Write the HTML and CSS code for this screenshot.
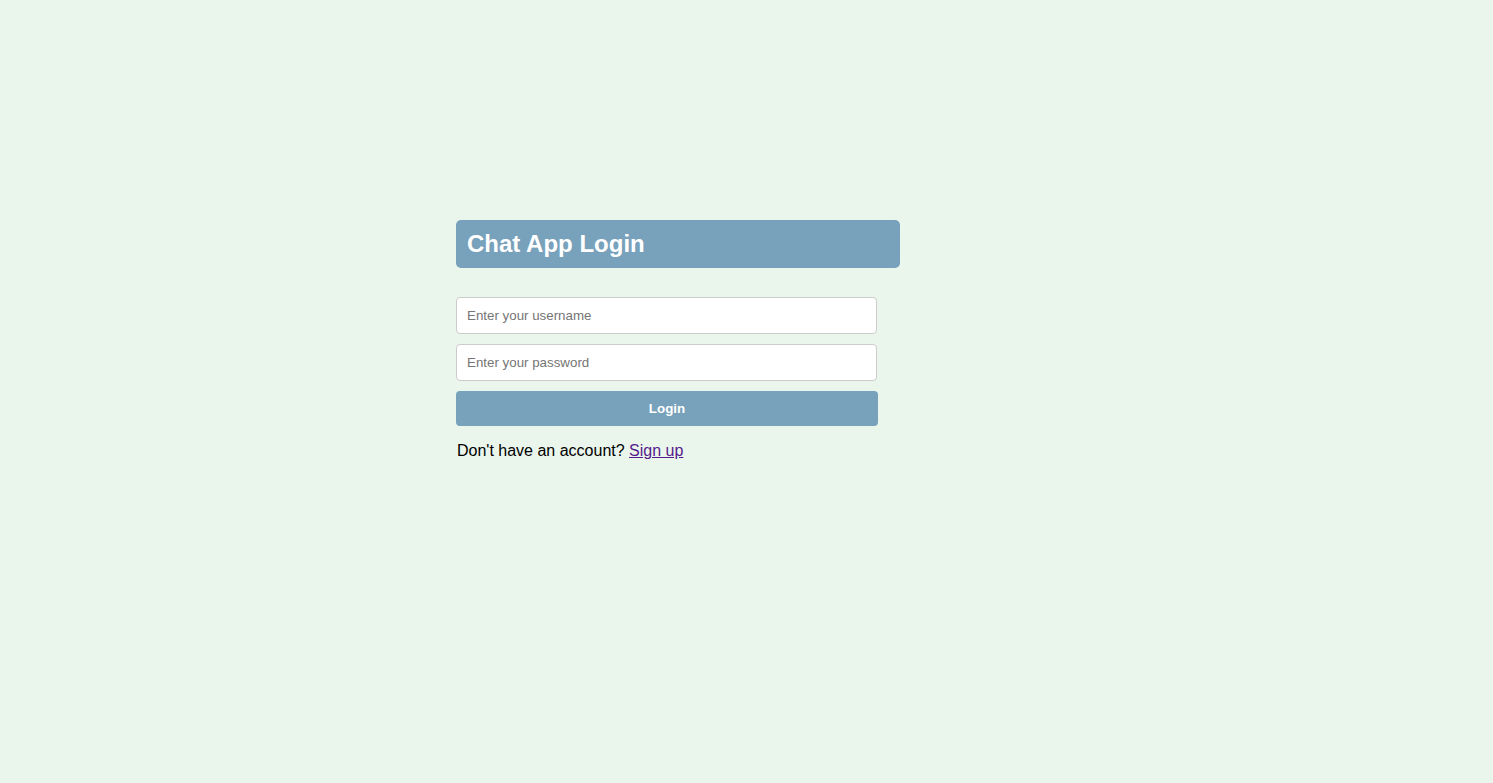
FILE: index.html
```html
<!DOCTYPE html>
<html lang="en">
<head>
<meta charset="utf-8">
<title>Chat App Login</title>
<link rel="stylesheet" href="styles.css">
</head>
<body>
<main class="page">
  <section class="card">
    <header class="card-header">
      <h1 class="title">Chat App Login</h1>
    </header>
    <form class="form">
      <input class="field" type="text" placeholder="Enter your username">
      <input class="field" type="password" placeholder="Enter your password">
      <button class="btn" type="button">Login</button>
    </form>
    <p class="signup">Don't have an account? <a class="signup-link" href="#signup">Sign up</a></p>
  </section>
</main>
</body>
</html>
```

FILE: styles.css
```css
html, body {
  margin: 0;
  padding: 0;
}
body {
  background: #eaf5ec;
  font-family: "Liberation Sans", Arial, sans-serif;
  color: #000;
  min-height: 783px;
}
.page {
  display: flex;
  justify-content: center;
  padding-top: 210px;
  padding-right: 1px;
}
.card {
  width: 580px;
  padding: 10px;
}
.card-header {
  width: 444px;
  box-sizing: border-box;
  background: #78a1bb;
  border-radius: 5px;
  padding: 10px 11px;
}
.title {
  margin: 0;
  font-size: 24px;
  line-height: 28px;
  font-weight: bold;
  color: #fff;
}
.form {
  display: flex;
  flex-direction: column;
  gap: 10px;
  width: 422px;
  margin-top: 29px;
}
.field {
  width: 421px;
  box-sizing: border-box;
  height: 37px;
  padding: 0 10px;
  border: 1px solid #cccccc;
  border-radius: 4px;
  background: #fff;
  font-family: "Liberation Sans", Arial, sans-serif;
  font-size: 13.33px;
  color: #333;
}
.field::placeholder {
  color: #757575;
}
.btn {
  width: 422px;
  height: 35px;
  border: none;
  border-radius: 4px;
  background: #78a1bb;
  color: #fff;
  font-family: "Liberation Sans", Arial, sans-serif;
  font-size: 13.33px;
  font-weight: bold;
  cursor: pointer;
}
.signup {
  margin: 16px 0 0;
  padding-left: 1px;
  font-size: 16px;
  line-height: 18px;
}
.signup-link {
  color: #551a8b;
}
```
